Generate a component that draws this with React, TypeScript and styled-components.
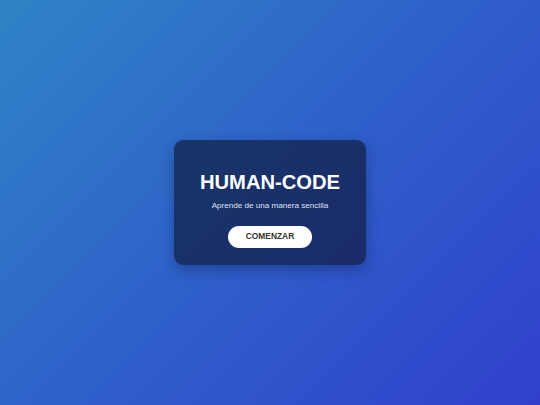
import { createGlobalStyle, styled } from "styled-components";

const GlobalStyle = createGlobalStyle`
    html, body {
        margin: 0;
        padding: 0;
        height: 100%;
    }

    body {
        font-family: "Liberation Sans", Arial, sans-serif;
    }

    #root {
        height: 100%;
    }
`;

const StyledPage = styled.div`
    min-height: 100vh;
    display: flex;
    align-items: center;
    justify-content: center;
    background: linear-gradient(135deg, #2f84c6 0%, #2f60ca 50%, #3140cc 100%);
`;

const StyledCard = styled.div`
    width: 192px;
    box-sizing: border-box;
    padding: 31px 20px 17px;
    display: flex;
    flex-direction: column;
    align-items: center;
    border-radius: 9px;
    background: linear-gradient(135deg, #183568 0%, #1a2c69 100%);
    box-shadow: 0 5px 14px rgba(10, 20, 60, 0.35);
`;

const StyledTitle = styled.h1`
    margin: 0;
    font-size: 20.2px;
    font-weight: bold;
    color: #ffffff;
`;

const StyledSubtitle = styled.p`
    margin: 7.5px 0 16px;
    font-size: 8.1px;
    color: #dde3f2;
`;

const StyledButton = styled.button`
    border: none;
    border-radius: 999px;
    padding: 6px 17.5px;
    background: #ffffff;
    color: #333333;
    font-family: "Liberation Sans", Arial, sans-serif;
    font-size: 8.4px;
    font-weight: bold;
    line-height: 9.6px;
    cursor: pointer;
`;

export default function App() {
    return (
        <>
            <GlobalStyle/>
            <StyledPage>
                <StyledCard>
                    <StyledTitle>HUMAN-CODE</StyledTitle>
                    <StyledSubtitle>Aprende de una manera sencilla</StyledSubtitle>
                    <StyledButton>COMENZAR</StyledButton>
                </StyledCard>
            </StyledPage>
        </>
    )
};
